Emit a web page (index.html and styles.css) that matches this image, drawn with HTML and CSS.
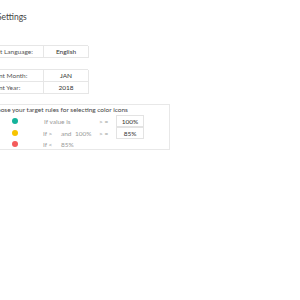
FILE: index.html
```html
<!DOCTYPE html>
<html lang="en">
<head>
    <meta charset="UTF-8">
    <title>Settings</title>
    <link rel="stylesheet" href="styles.css">
</head>
<body>
    <div class="page">
        <h1 class="title">Settings</h1>

        <div class="field-grid">
            <div class="cell label">Report Language:</div>
            <div class="cell value">English</div>
        </div>

        <div class="field-grid period">
            <div class="cell label">Current Month:</div>
            <div class="cell value">JAN</div>
            <div class="cell label">Current Year:</div>
            <div class="cell value">2018</div>
        </div>

        <div class="rules">
            <p class="rules-title">Choose your target rules for selecting color icons</p>
            <div class="rule">
                <div class="dot-col"><span class="dot green"></span></div>
                <div class="cond"><span class="value-is">If value is</span></div>
                <div class="op">&gt; =</div>
                <div class="target">100%</div>
            </div>
            <div class="rule">
                <div class="dot-col"><span class="dot yellow"></span></div>
                <div class="cond"><span class="w-if">If &gt;</span><span class="w-and">and</span><span>100%</span></div>
                <div class="op">&gt; =</div>
                <div class="target second">85%</div>
            </div>
            <div class="rule last">
                <div class="dot-col"><span class="dot red"></span></div>
                <div class="cond"><span class="w-if">If &lt;</span><span>85%</span></div>
            </div>
        </div>
    </div>
</body>
</html>
```

FILE: styles.css
```css
* {
    margin: 0;
    padding: 0;
    box-sizing: border-box;
}
body {
    font-family: 'Lato', 'Liberation Sans', sans-serif;
    background: #fff;
    color: #444;
    overflow: hidden;
}
.page {
    margin-left: -16px;
    padding-top: 11px;
}
.title {
    font-size: 8.5px;
    line-height: 12px;
    font-weight: 400;
    color: #444;
    margin: 0 0 22px 13px;
}
.field-grid {
    display: grid;
    grid-template-columns: 59px 45px;
    width: 104px;
    border-top: 1px solid #e6e6e6;
    border-left: 1px solid #e6e6e6;
}
.field-grid.period {
    margin-top: 11px;
}
.cell {
    height: 12px;
    line-height: 11px;
    font-size: 6.5px;
    border-right: 1px solid #e6e6e6;
    border-bottom: 1px solid #e6e6e6;
    white-space: nowrap;
    overflow: hidden;
}
.cell.label {
    text-indent: -2px;
    color: #555;
}
.cell.value {
    text-align: center;
    color: #333;
}
.rules {
    margin-top: 10px;
    width: 186px;
    border: 1px solid #e8e8e8;
}
.rules-title {
    font-size: 6.5px;
    line-height: 10px;
    padding-left: 4px;
    color: #444;
    white-space: nowrap;
}
.rule {
    display: flex;
    align-items: center;
    height: 12px;
    font-size: 6.5px;
    color: #999;
}
.rule.last {
    height: 10px;
}
.dot-col {
    width: 58px;
    display: flex;
    align-items: center;
}
.dot {
    display: block;
    width: 6px;
    height: 6px;
    margin-left: 27px;
    border-radius: 50%;
}
.dot.green { background: #14b39b; }
.dot.yellow { background: #f7c400; }
.dot.red { background: #f45b5b; }
.cond {
    width: 56px;
    display: flex;
    white-space: nowrap;
}
.value-is {
    padding-left: 1px;
}
.w-if {
    width: 18px;
}
.w-and {
    width: 14px;
}
.op {
    width: 17px;
}
.target {
    width: 28px;
    height: 12px;
    line-height: 11px;
    border: 1px solid #e3e3e3;
    text-align: center;
    color: #333;
}
.target.second {
    margin-top: -1px;
}
```
